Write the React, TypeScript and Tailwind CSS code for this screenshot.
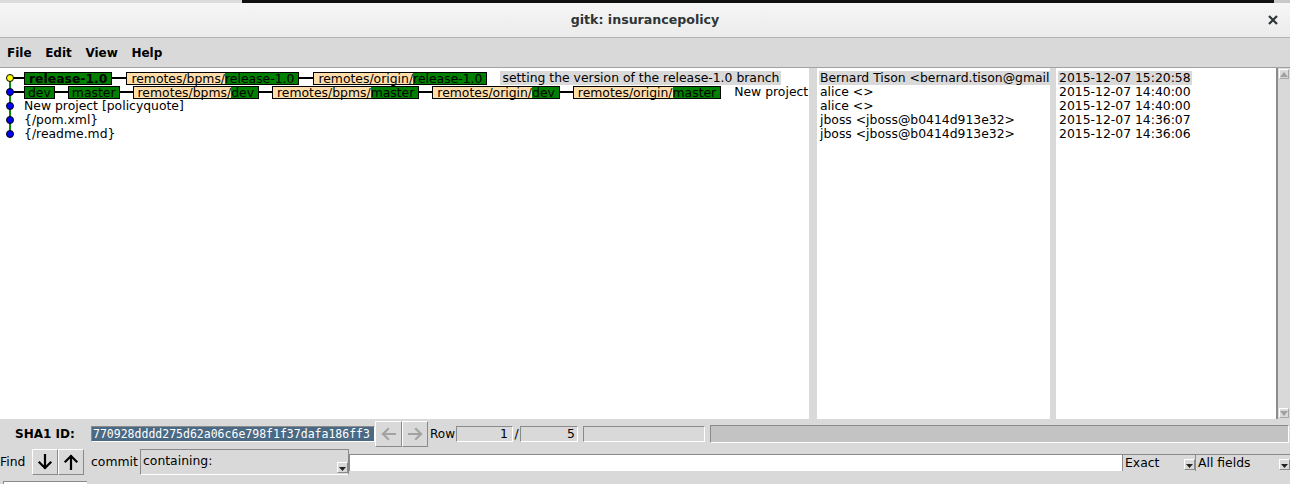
import React from "react";

const GREEN = "#0a8a0a";

const GraphCell = ({ top = true, bottom = true, dot = "#0000ff", stub = false }) => (
  <svg width="24" height="14" className="shrink-0">
    {top && <line x1="10" y1="0" x2="10" y2="7" stroke={GREEN} strokeWidth="2" />}
    {bottom && <line x1="10" y1="7" x2="10" y2="14" stroke={GREEN} strokeWidth="2" />}
    {stub && <line x1="13" y1="7" x2="24" y2="7" stroke="#000" strokeWidth="2" />}
    <circle cx="10" cy="7" r="3.5" fill={dot} stroke="#000" strokeWidth="1" />
  </svg>
);

const Conn = ({ w = "w-[14px]" }) => <div className={"h-[2px] bg-black shrink-0 " + w} />;

const Head = ({ name, bold = false }) => (
  <div
    className={
      "h-[13px] leading-[11px] border border-black bg-[#008000] whitespace-nowrap shrink-0 " +
      (bold ? "font-bold px-[4px]" : "px-[3px]")
    }
  >
    {name}
  </div>
);

const Remote = ({ prefix, name }) => (
  <div className="h-[13px] leading-[11px] border border-black flex whitespace-nowrap shrink-0">
    <span className="bg-[#ffddaa] pl-[4px]">{prefix}</span>
    <span className="bg-[#008000] pr-[4px]">{name}</span>
  </div>
);

const Arrow = ({ dir, color }) => {
  const d = {
    left: "M15 9H3 M8 4L3 9L8 14",
    right: "M3 9H15 M10 4L15 9L10 14",
    down: "M9 2V15 M3.5 9.5L9 15L14.5 9.5",
    up: "M9 16V3 M3.5 8.5L9 3L14.5 8.5",
  }[dir];
  return (
    <svg width="18" height="18" viewBox="0 0 18 18">
      <path d={d} stroke={color} strokeWidth="2.2" fill="none" strokeLinecap="square" />
    </svg>
  );
};

const RaisedBtn = ({ children, w }) => (
  <div
    className={
      "h-[26px] flex items-center justify-center border border-t-white border-l-white border-b-[#8a8a8a] border-r-[#8a8a8a] shrink-0 " +
      w
    }
  >
    {children}
  </div>
);

const Indicator = () => (
  <div className="w-[11px] h-[11px] self-end mb-px border border-t-white border-l-white border-b-[#8a8a8a] border-r-[#8a8a8a] flex items-end justify-center shrink-0">
    <svg width="7" height="4" className="mb-px">
      <path d="M0 0H7L3.5 4Z" fill="#222" />
    </svg>
  </div>
);

const authors = [
  "Bernard Tison <bernard.tison@gmail.com>",
  "alice <>",
  "alice <>",
  "jboss <jboss@b0414d913e32>",
  "jboss <jboss@b0414d913e32>",
];

const dates = [
  "2015-12-07 15:20:58",
  "2015-12-07 14:40:00",
  "2015-12-07 14:40:00",
  "2015-12-07 14:36:07",
  "2015-12-07 14:36:06",
];

export default function App() {
  return (
    <div
      className="w-[1290px] h-[484px] overflow-hidden bg-[#d9d9d9] text-black text-[12.4px] flex flex-col"
      style={{ fontFamily: '"DejaVu Sans", "Liberation Sans", sans-serif' }}
    >
      {/* top strip */}
      <div className="h-[3px] flex shrink-0">
        <div className="w-[242px] bg-[#dcdcdc]" />
        <div className="flex-1 bg-[#111]" />
        <div className="w-[16px] bg-[#c8c8c8]" />
      </div>

      {/* title bar */}
      <div className="h-[35px] shrink-0 bg-gradient-to-b from-[#f6f6f6] to-[#ebebeb] border-b border-[#b3b3b3] flex items-center">
        <div className="w-[22px]" />
        <div className="flex-1 text-center font-bold text-[12.6px] text-[#2e3436]">gitk: insurancepolicy</div>
        <svg width="10" height="10" className="mr-[12px]">
          <path d="M1 1L9 9M9 1L1 9" stroke="#2e3436" strokeWidth="2.2" />
        </svg>
      </div>

      {/* menu bar */}
      <div className="h-[30px] shrink-0 border-b border-[#a2a2a2] flex items-center pl-[7px] gap-[13.6px] font-bold text-[12px]">
        <span>File</span>
        <span>Edit</span>
        <span>View</span>
        <span>Help</span>
      </div>

      {/* panes */}
      <div className="h-[351px] shrink-0 flex">
        {/* graph + message */}
        <div className="w-[809px] bg-white pt-[3px] overflow-hidden">
          <div className="h-[14px] flex items-center">
            <GraphCell top={false} dot="#ffff00" stub />
            <Head name="release-1.0" bold />
            <Conn />
            <Remote prefix="remotes/bpms/" name="release-1.0" />
            <Conn />
            <Remote prefix="remotes/origin/" name="release-1.0" />
            <span className="ml-[13px] h-[14px] leading-[14px] bg-[#d9d9d9] px-[2px] whitespace-nowrap">
              setting the version of the release-1.0 branch
            </span>
          </div>
          <div className="h-[14px] flex items-center">
            <GraphCell stub />
            <Head name="dev" />
            <Conn w="w-[13px]" />
            <Head name="master" />
            <Conn w="w-[13px]" />
            <Remote prefix="remotes/bpms/" name="dev" />
            <Conn w="w-[13px]" />
            <Remote prefix="remotes/bpms/" name="master" />
            <Conn w="w-[13px]" />
            <Remote prefix="remotes/origin/" name="dev" />
            <Conn w="w-[13px]" />
            <Remote prefix="remotes/origin/" name="master" />
            <span className="ml-[13px] whitespace-nowrap">New project</span>
          </div>
          <div className="h-[14px] flex items-center">
            <GraphCell />
            <span className="whitespace-nowrap">New project [policyquote]</span>
          </div>
          <div className="h-[14px] flex items-center">
            <GraphCell />
            <span className="whitespace-nowrap">{"{/pom.xml}"}</span>
          </div>
          <div className="h-[14px] flex items-center">
            <GraphCell bottom={false} />
            <span className="whitespace-nowrap">{"{/readme.md}"}</span>
          </div>
        </div>

        <div className="w-[8px]" />

        {/* authors */}
        <div className="w-[233px] bg-white pt-[3px] pl-[2px] overflow-hidden">
          {authors.map((a, i) => (
            <div
              key={i}
              className={
                "h-[14px] leading-[14px] whitespace-nowrap pl-px overflow-hidden " + (i === 0 ? "bg-[#d9d9d9]" : "")
              }
            >
              {a}
            </div>
          ))}
        </div>

        <div className="w-[6px]" />

        {/* dates */}
        <div className="w-[220px] bg-white pt-[3px] pl-[2px] overflow-hidden">
          {dates.map((d, i) => (
            <div key={i} className="h-[14px] leading-[14px]">
              <span className={"inline-block px-px whitespace-nowrap " + (i === 0 ? "bg-[#d9d9d9]" : "")}>{d}</span>
            </div>
          ))}
        </div>

        {/* scrollbar */}
        <div className="w-[14px] border-l-2 border-[#8c8c8c] flex flex-col items-center py-px">
          <div className="w-[10px] h-[10px] flex items-center justify-center border border-t-white border-l-white border-b-[#a8a8a8] border-r-[#a8a8a8]">
            <svg width="8" height="5">
              <path d="M4 0L8 5H0Z" fill="#a0a0a0" />
            </svg>
          </div>
          <div className="flex-1" />
          <div className="w-[10px] h-[10px] flex items-center justify-center border border-t-white border-l-white border-b-[#a8a8a8] border-r-[#a8a8a8]">
            <svg width="8" height="5">
              <path d="M0 0H8L4 5Z" fill="#a0a0a0" />
            </svg>
          </div>
        </div>
      </div>

      {/* SHA1 row */}
      <div className="h-[30px] shrink-0 flex items-center">
        <span className="pl-[15px] w-[91px] font-bold shrink-0 text-[12px]">SHA1 ID:</span>
        <div className="w-[284px] h-[16px] shrink-0 border border-t-[#8a8a8a] border-l-[#8a8a8a] border-b-white border-r-white bg-white overflow-hidden">
          <div
            className="bg-[#4a6984] text-white text-[11.5px] leading-[14px] pl-px whitespace-nowrap"
            style={{ fontFamily: '"DejaVu Sans Mono", monospace' }}
          >
            770928dddd275d62a06c6e798f1f37dafa186ff3
          </div>
        </div>
        <RaisedBtn w="w-[27px]">
          <Arrow dir="left" color="#a3a3a3" />
        </RaisedBtn>
        <RaisedBtn w="w-[26px]">
          <Arrow dir="right" color="#a3a3a3" />
        </RaisedBtn>
        <span className="ml-[2px] w-[26px] text-[12px]">Row</span>
        <div className="w-[57px] h-[16px] border border-t-[#8a8a8a] border-l-[#8a8a8a] border-b-white border-r-white text-right pr-[4px] leading-[14px]">
          1
        </div>
        <span className="w-[7px] text-center">/</span>
        <div className="w-[58px] h-[16px] border border-t-[#8a8a8a] border-l-[#8a8a8a] border-b-white border-r-white text-right pr-[2px] leading-[14px]">
          5
        </div>
        <div className="ml-[5px] w-[122px] h-[16px] border border-t-[#8a8a8a] border-l-[#8a8a8a] border-b-white border-r-white" />
        <div className="ml-[5px] flex-1 mr-px h-[18px] bg-[#c3c3c3] border border-t-[#8a8a8a] border-l-[#8a8a8a] border-b-white border-r-white" />
      </div>

      {/* Find row */}
      <div className="h-[26px] shrink-0 flex items-center">
        <span className="w-[32px]">Find</span>
        <RaisedBtn w="w-[26px]">
          <Arrow dir="down" color="#000" />
        </RaisedBtn>
        <RaisedBtn w="w-[26px]">
          <Arrow dir="up" color="#000" />
        </RaisedBtn>
        <span className="ml-[7px] w-[49px]">commit</span>
        <div className="w-[209px] h-[26px] flex border border-t-[#8a8a8a] border-l-[#8a8a8a] border-b-white border-r-[#8a8a8a] pl-[2px]">
          <span className="flex-1 leading-[22px]">containing:</span>
          <Indicator />
        </div>
        <div className="w-[773px] h-[17px] bg-white border-t border-l border-[#8a8a8a]" />
        <div className="w-[73px] h-[17px] flex border-t border-l border-[#8a8a8a] pl-[2px] leading-[15px]">
          <span className="flex-1">Exact</span>
          <Indicator />
        </div>
        <div className="flex-1 h-[17px] flex border-t border-l border-[#8a8a8a] pl-[2px] leading-[15px]">
          <span className="flex-1">All fields</span>
          <Indicator />
        </div>
      </div>

      {/* bottom partial */}
      <div className="flex-1 pt-[6px] pl-[3px]">
        <div className="w-[84px] h-[10px] bg-white border-t border-l border-[#8a8a8a]" />
      </div>
    </div>
  );
}
